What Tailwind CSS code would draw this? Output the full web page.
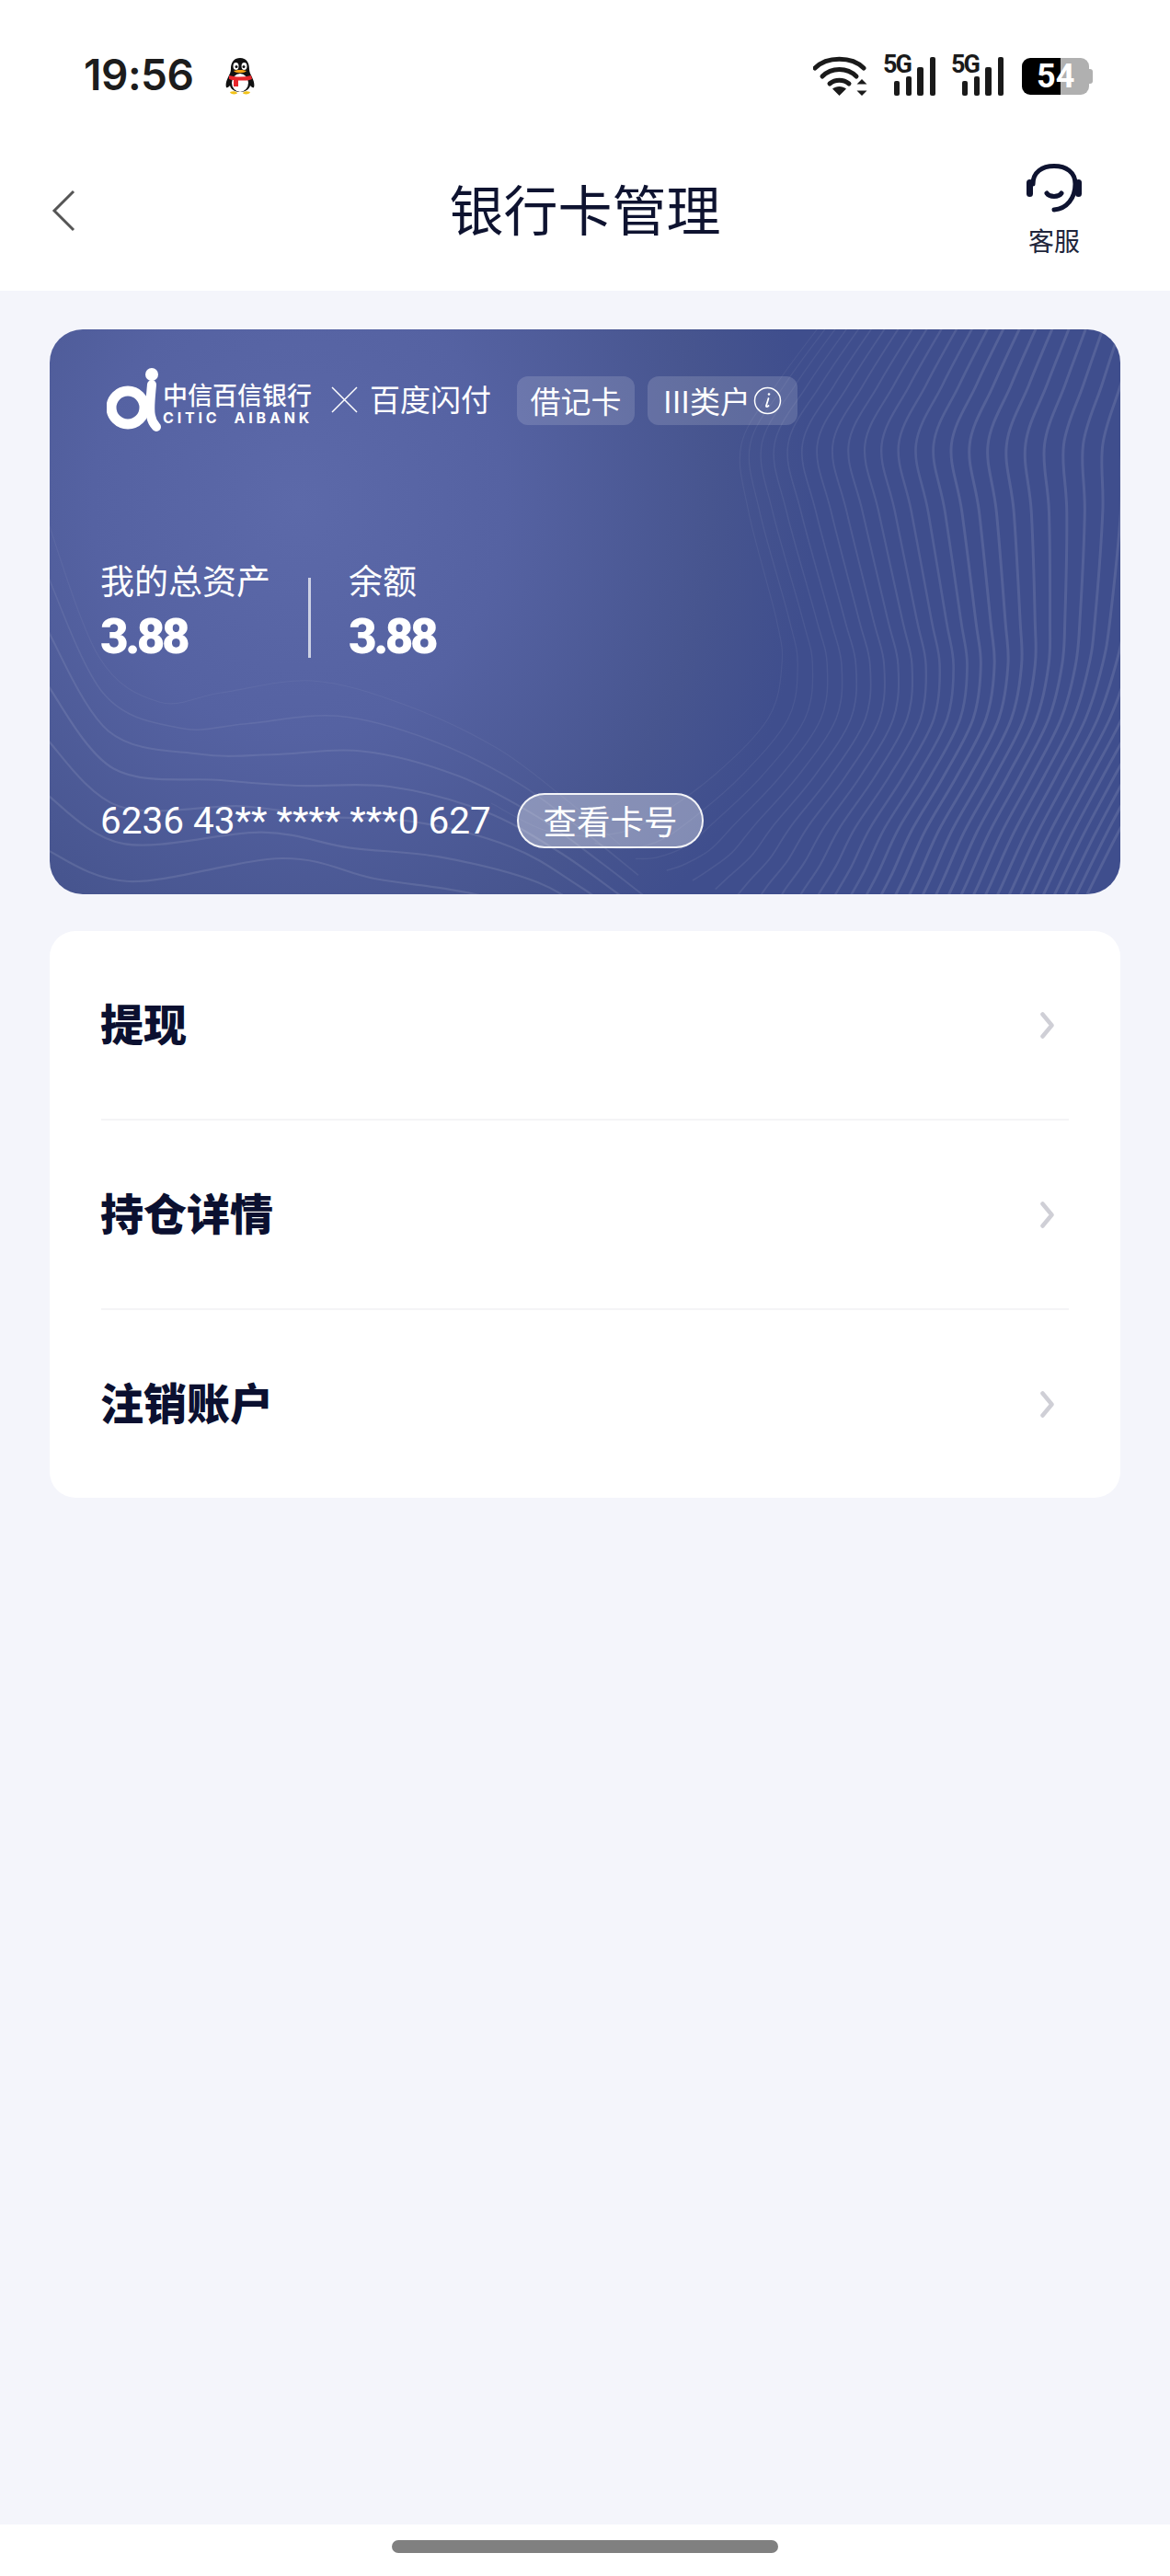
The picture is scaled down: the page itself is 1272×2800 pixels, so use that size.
<!DOCTYPE html>
<html lang="zh-CN">
<head>
    <meta charset="UTF-8">
    <meta name="viewport" content="width=device-width, initial-scale=1.0">
    <title>银行卡管理</title>
    <script src="https://cdn.jsdelivr.net/npm/@tailwindcss/browser@4"></script>
</head>
<body class="bg-[#f4f5fb] font-['Noto_Sans_CJK_SC','Noto_Sans',sans-serif]">
<div class="w-[1272px] h-[2800px] flex flex-col bg-[#f4f5fb]">

    <!-- status bar + nav -->
    <header class="bg-white h-[316px] shrink-0">
        <div class="h-[164px] flex items-start justify-between pl-[91px] pr-[84px] pt-[58px]">
            <div class="flex items-center gap-[34px]">
                <span class="font-['Inter',sans-serif] font-semibold text-[46px] leading-[46px] tracking-[-0.5px] text-[#1c1c1c]">19:56</span>
                <svg class="w-[34px] h-[42px] mt-[3px]" viewBox="0 0 34 42">
                    <path d="M17 1C10 1 7 6 7 13c0 3-1 5-3 9-2 4-3 8-2 11 1 1 3-1 4-2 1 4 5 7 11 7s10-3 11-7c1 1 3 3 4 2 1-3 0-7-2-11-2-4-3-6-3-9 0-7-3-12-10-12z" fill="#111"/>
                    <ellipse cx="17" cy="28" rx="9" ry="10" fill="#fff"/>
                    <ellipse cx="12.500" cy="10" rx="3" ry="4" fill="#fff"/>
                    <ellipse cx="21.500" cy="10" rx="3" ry="4" fill="#fff"/>
                    <circle cx="13" cy="10.500" r="1.500" fill="#111"/>
                    <circle cx="21" cy="10.500" r="1.500" fill="#111"/>
                    <path d="M10 15c4-1.500 10-1.500 14 0-2 3-12 3-14 0z" fill="#f5a316"/>
                    <path d="M5 20c8 2 16 2 24 0l1 4c-3 1-5 1.500-8 1.500h-7V32h-5v-7c-2 0-4-.5-5-1z" fill="#e8262b"/>
                    <path d="M6 38c3-1 6-1 8 1 0 2-8 2-8-1zM20 39c2-2 5-2 8-1 0 3-8 3-8 1z" fill="#f3c318"/>
                </svg>
            </div>
            <div class="flex items-start pt-[2px]">
                <svg class="w-[60px] h-[44px]" viewBox="0 0 60 44" fill="none">
                    <path d="M2 14C15 1 42 1 55 14" stroke="#1a1a1a" stroke-width="5" stroke-linecap="round"/>
                    <path d="M10 23C20 13 37 13 47 23" stroke="#1a1a1a" stroke-width="5" stroke-linecap="round"/>
                    <path d="M18 31c6-5 15-5 21 0" stroke="#1a1a1a" stroke-width="5" stroke-linecap="round"/>
                    <path d="M28.500 44l-7.500-7.500c4-3.500 11-3.500 15 0z" fill="#1a1a1a"/>
                    <path d="M53 26l5.500 5.500h-11zM53 44l-5.500-5.500h11z" fill="#1a1a1a"/>
                </svg>
                <div class="relative w-[56px] h-[44px] ml-[16px]">
                    <span class="absolute left-0 top-[-4px] font-['Roboto',sans-serif] font-bold text-[27px] leading-[28px] tracking-[-2px] text-[#1a1a1a]">5G</span>
                    <div class="absolute left-[12px] bottom-0 flex items-end gap-[6.500px]">
                        <div class="w-[6px] h-[16px] bg-[#1a1a1a] rounded-[2px]"></div>
                        <div class="w-[6px] h-[21px] bg-[#1a1a1a] rounded-[2px]"></div>
                        <div class="w-[7px] h-[31px] bg-[#1a1a1a] rounded-[2px]"></div>
                        <div class="w-[6px] h-[42px] bg-[#1a1a1a] rounded-[2px]"></div>
                    </div>
                </div>
                <div class="relative w-[56px] h-[44px] ml-[18px]">
                    <span class="absolute left-0 top-[-4px] font-['Roboto',sans-serif] font-bold text-[27px] leading-[28px] tracking-[-2px] text-[#1a1a1a]">5G</span>
                    <div class="absolute left-[12px] bottom-0 flex items-end gap-[6.500px]">
                        <div class="w-[6px] h-[16px] bg-[#1a1a1a] rounded-[2px]"></div>
                        <div class="w-[6px] h-[21px] bg-[#1a1a1a] rounded-[2px]"></div>
                        <div class="w-[7px] h-[31px] bg-[#1a1a1a] rounded-[2px]"></div>
                        <div class="w-[6px] h-[42px] bg-[#1a1a1a] rounded-[2px]"></div>
                    </div>
                </div>
                <div class="relative flex items-center w-[77px] h-[40px] ml-[21px] mt-[3px]">
                    <div class="w-[42px] h-[40px] bg-black rounded-l-[9px]"></div>
                    <div class="w-[31px] h-[40px] bg-[#b0b0b0] rounded-r-[9px]"></div>
                    <div class="w-[4px] h-[16px] bg-[#b0b0b0] rounded-r-[3px]"></div>
                    <span class="absolute left-[16px] top-0 font-['Roboto',sans-serif] font-bold text-[36px] leading-[40px] text-white">54</span>
                </div>
            </div>
        </div>
        <div class="h-[130px] grid grid-cols-[1fr_auto_1fr] items-center px-[56px]">
            <svg class="w-[26px] h-[46px]" viewBox="0 0 26 46" fill="none">
                <path d="M24 2L3 23l21 21" stroke="#555" stroke-width="3"/>
            </svg>
            <h1 class="text-[59px] leading-[70px] mb-[6px] font-normal text-[#0e1330] text-center">银行卡管理</h1>
            <div class="flex flex-col items-center justify-self-end mr-[40px] mt-[-3px]">
                <svg class="w-[60px] h-[54px]" viewBox="0 0 60 54" fill="none">
                    <path d="M7 22C7 9 17 2.500 30 2.500S53 9 53 22c0 15-9 27-23 28" stroke="#0e1330" stroke-width="5" stroke-linecap="round"/>
                    <rect x="0" y="17" width="7" height="19" rx="3.500" fill="#0e1330"/>
                    <rect x="53" y="17" width="7" height="19" rx="3.500" fill="#0e1330"/>
                    <path d="M22 32c3 4.500 13 4.500 16 0" stroke="#0e1330" stroke-width="5" stroke-linecap="round"/>
                </svg>
                <span class="text-[28px] leading-[32px] mt-[13px] text-[#20253b]">客服</span>
            </div>
        </div>
    </header>

    <main class="flex-1 px-[54px] pt-[42px] flex flex-col gap-[40px]">
        <!-- bank card -->
        <section class="relative h-[614px] rounded-[36px] overflow-hidden bg-[#3f4e8d] bg-[radial-gradient(ellipse_560px_620px_at_270px_190px,#5c69a9_0%,#5562a2_40%,#47558f_80%,#3f4e8d_100%)] text-white">
            <svg id="waves" class="absolute inset-0 w-full h-full" viewBox="0 0 1164 614" fill="none"></svg>

            <div class="relative pl-[56px] pt-[48px] flex items-center h-[101px]">
                <svg class="w-[60px] h-[70px] shrink-0 ml-[6px] mt-[4px]" viewBox="0 0 60 70" fill="none">
                    <circle cx="23" cy="43" r="18" stroke="#fff" stroke-width="11"/>
                    <path d="M49 18C48 30 46 45 48 52c1 6 4 10 6 12" stroke="#fff" stroke-width="10" stroke-linecap="round"/>
                    <circle cx="49" cy="7" r="7" fill="#fff"/>
                </svg>
                <div class="ml-[1px] mt-[10px] w-[164px] font-medium">
                    <div class="text-[27px] leading-[30px] whitespace-nowrap">中信百信银行</div>
                    <div class="font-['Inter',sans-serif] font-bold text-[16px] leading-[16px] tracking-[3.800px] whitespace-pre mt-[2px]">CITIC  AIBANK</div>
                </div>
                <svg class="w-[29px] h-[29px] ml-[19px] shrink-0 mt-[4px]" viewBox="0 0 29 29" fill="none">
                    <path d="M1 1l27 27M28 1L1 28" stroke="#fff" stroke-width="1.500"/>
                </svg>
                <span class="ml-[13px] text-[33px] leading-[40px] whitespace-nowrap">百度闪付</span>
                <span class="ml-[28px] mt-[6px] h-[53px] w-[128px] flex items-center justify-center rounded-[12px] bg-white/15 text-[33px] whitespace-nowrap">借记卡</span>
                <span class="ml-[14px] mt-[6px] h-[53px] w-[163px] flex items-center justify-center gap-[3px] rounded-[12px] bg-white/15 text-[33px] whitespace-nowrap">
                    III类户
                    <svg class="w-[31px] h-[31px]" viewBox="0 0 31 31" fill="none">
                        <circle cx="15.500" cy="15.500" r="14" stroke="#fff" stroke-width="1.500"/>
                        <path d="M16.500 13l-2.500 8c-.3 1.500 1 1.500 2.500 0" stroke="#fff" stroke-width="1.800" stroke-linecap="round"/>
                        <circle cx="17" cy="8.500" r="1.300" fill="#fff"/>
                    </svg>
                </span>
            </div>

            <div class="relative flex items-start pl-[55px] mt-[149px]">
                <div class="w-[226px]">
                    <div class="text-[37px] leading-[44px] whitespace-nowrap">我的总资产</div>
                    <div class="font-['Roboto',sans-serif] font-black text-[53px] leading-[60px] tracking-[-3.500px] mt-[10px]">3.88</div>
                </div>
                <div class="w-[3px] h-[87px] bg-white/70 mt-[20px] shrink-0"></div>
                <div class="ml-[41px]">
                    <div class="text-[37px] leading-[44px] whitespace-nowrap">余额</div>
                    <div class="font-['Roboto',sans-serif] font-black text-[53px] leading-[60px] tracking-[-3.500px] mt-[10px]">3.88</div>
                </div>
            </div>

            <div class="relative flex items-center pl-[55px] mt-[140px]">
                <span class="w-[453px] font-['Roboto',sans-serif] text-[40.500px] leading-[60px] whitespace-pre">6236 43** **** ***0 627</span>
                <span class="w-[203px] h-[60px] flex items-center justify-center rounded-full border-2 border-white/90 bg-white/35 text-[36.500px] whitespace-nowrap">查看卡号</span>
            </div>
        </section>

        <!-- menu -->
        <section class="bg-white rounded-[28px] px-[56px] h-[616px] flex flex-col">
            <div class="h-[206px] flex items-center justify-between border-b-2 border-[#f4f4f6] pr-[16px]">
                <span class="text-[47px] font-black ml-[-1px] mt-[-6px] text-[#0b1030]">提现</span>
                <svg class="w-[15px] h-[29px]" viewBox="0 0 15 29" fill="none"><path d="M2.500 2.500l10 12-10 12" stroke="#cfcfd6" stroke-width="4.500" stroke-linecap="round" stroke-linejoin="round"/></svg>
            </div>
            <div class="h-[206px] flex items-center justify-between border-b-2 border-[#f4f4f6] pr-[16px]">
                <span class="text-[47px] font-black ml-[-1px] mt-[-6px] text-[#0b1030]">持仓详情</span>
                <svg class="w-[15px] h-[29px]" viewBox="0 0 15 29" fill="none"><path d="M2.500 2.500l10 12-10 12" stroke="#cfcfd6" stroke-width="4.500" stroke-linecap="round" stroke-linejoin="round"/></svg>
            </div>
            <div class="h-[204px] flex items-center justify-between pr-[16px]">
                <span class="text-[47px] font-black ml-[-1px] mt-[-6px] text-[#0b1030]">注销账户</span>
                <svg class="w-[15px] h-[29px]" viewBox="0 0 15 29" fill="none"><path d="M2.500 2.500l10 12-10 12" stroke="#cfcfd6" stroke-width="4.500" stroke-linecap="round" stroke-linejoin="round"/></svg>
            </div>
        </section>
    </main>

    <!-- home indicator -->
    <footer class="h-[56px] bg-white shrink-0 flex justify-center pt-[17px]">
        <div class="w-[420px] h-[14px] rounded-full bg-[#808080]"></div>
    </footer>
</div>

<script>
    // contour lines on the card: each family is interpolated between two key curves
    const rightInner = [[838,-5],[790,60],[752,125],[760,199],[790,315],[796,365],[781,423],[722,485],[650,535],[600,550],[540,545],[480,515]];
    const rightOuter = [[1360,-5],[1355,60],[1345,125],[1325,199],[1285,315],[1260,365],[1230,423],[1195,485],[1160,550],[1125,620],[1095,680],[1065,740]];
    const leftTop = [[-5,200],[53,355],[119,405],[186,395],[286,382],[386,408],[486,455],[560,510],[620,560]];
    const leftBottom = [[-5,565],[86,600],[253,575],[353,597],[453,612],[560,640],[620,680],[680,720],[740,760]];

    function smoothPath(pts) {
        let d = `M${pts[0][0]} ${pts[0][1]}`;
        for (let i = 0; i < pts.length - 1; i++) {
            const p0 = pts[i - 1] || pts[i], p1 = pts[i], p2 = pts[i + 1], p3 = pts[i + 2] || p2;
            const c1x = p1[0] + (p2[0] - p0[0]) / 6, c1y = p1[1] + (p2[1] - p0[1]) / 6;
            const c2x = p2[0] - (p3[0] - p1[0]) / 6, c2y = p2[1] - (p3[1] - p1[1]) / 6;
            d += `C${c1x.toFixed(1)} ${c1y.toFixed(1)} ${c2x.toFixed(1)} ${c2y.toFixed(1)} ${p2[0].toFixed(1)} ${p2[1].toFixed(1)}`;
        }
        return d;
    }

    // later points leave the inner curve faster, so only the first lines bend into the bowl
    function addFamily(a, b, count, power, alpha, width, ease) {
        const svg = document.getElementById("waves");
        for (let n = 0; n < count; n++) {
            const t = Math.pow(n / (count - 1), power);
            const pts = a.map((p, i) => {
                const along = Math.max(0, (i - 2) / (a.length - 3));
                const k = Math.pow(t, 1 - ease * along);
                return [p[0] + (b[i][0] - p[0]) * k, p[1] + (b[i][1] - p[1]) * k];
            });
            const path = document.createElementNS("http://www.w3.org/2000/svg", "path");
            path.setAttribute("d", smoothPath(pts));
            path.setAttribute("stroke", "#fff");
            path.setAttribute("stroke-opacity", (alpha * (0.5 + 0.5 * Math.min(1, t * 2.5))).toFixed(3));
            path.setAttribute("stroke-width", (1.2 + width * Math.min(1, t * 2.5)).toFixed(2));
            svg.appendChild(path);
        }
    }

    addFamily(rightInner, rightOuter, 32, 1.2, 0.11, 1.8, 0.6);
    addFamily(leftTop, leftBottom, 7, 1, 0.1, 1, 0);
</script>
</body>
</html>
